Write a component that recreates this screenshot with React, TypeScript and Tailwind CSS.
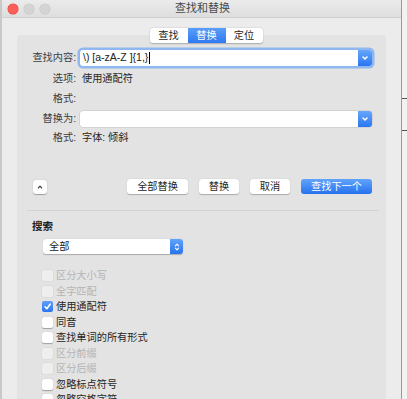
import React from 'react';

const font = { fontFamily: '"Liberation Sans", "Noto Sans CJK SC", sans-serif' };

const Chevron: React.FC<{ className?: string }> = ({ className }) => (
    <svg className={className} viewBox="0 0 10 10" fill="none" stroke="white" strokeWidth={1.6} strokeLinecap="round" strokeLinejoin="round">
        <path d="M3 4l2 2 2-2" />
    </svg>
);

const ComboInput: React.FC<{ value?: string; focused?: boolean }> = ({ value, focused }) => (
    <div
        className={`ml-[4px] flex h-[16px] w-[292px] items-stretch rounded-[3px] bg-white ${focused ? 'ring-[2.5px] ring-[#8fb8f0]' : 'shadow-[0_0_0_0.5px_#c4c4c4]'}`}
    >
        <div className="flex flex-1 items-center pl-[3px] text-[10.5px] text-[#222]">
            {value}
            {focused && <span className="ml-[1px] h-[12px] w-[1px] bg-black" />}
        </div>
        <div className="flex w-[14px] items-center justify-center rounded-r-[3px] bg-gradient-to-b from-[#66a6fa] to-[#2a76f0]">
            <Chevron className="h-[10px] w-[10px]" />
        </div>
    </div>
);

const Row: React.FC<{ label: string; h: number; children?: React.ReactNode }> = ({ label, h, children }) => (
    <div className="flex items-center" style={{ height: h }}>
        <div className="w-[59px] text-right text-[10.2px] text-[#3c3c3c]">{label}</div>
        {children}
    </div>
);

const Button: React.FC<{ label: string; w: string; primary?: boolean }> = ({ label, w, primary }) => (
    <div
        className={`flex h-[15px] items-center justify-center rounded-[3px] text-[10.2px] ${w} ${primary
            ? 'bg-gradient-to-b from-[#62a3fa] to-[#2572ef] text-white'
            : 'bg-white text-[#262626] shadow-[0_0.5px_1px_rgba(0,0,0,0.25)]'
            }`}
    >
        {label}
    </div>
);

const options: { label: string; disabled?: boolean; checked?: boolean }[] = [
    { label: '区分大小写', disabled: true },
    { label: '全字匹配', disabled: true },
    { label: '使用通配符', checked: true },
    { label: '同音' },
    { label: '查找单词的所有形式' },
    { label: '区分前缀', disabled: true },
    { label: '区分后缀', disabled: true },
    { label: '忽略标点符号' },
    { label: '忽略空格字符' },
];

const Checkbox: React.FC<{ label: string; disabled?: boolean; checked?: boolean }> = ({ label, disabled, checked }) => (
    <div className="flex h-[15.5px] items-center pl-[25px]">
        {checked ? (
            <div className="flex h-[11px] w-[11px] items-center justify-center rounded-[2px] bg-gradient-to-b from-[#5ea0f9] to-[#2a74ee]">
                <svg viewBox="0 0 10 10" className="h-[9px] w-[9px]" fill="none" stroke="white" strokeWidth={1.8} strokeLinecap="round" strokeLinejoin="round">
                    <path d="M2.2 5.3l2 2.2 3.8-5" />
                </svg>
            </div>
        ) : (
            <div
                className={`h-[11px] w-[11px] rounded-[2px] ${disabled ? 'bg-[#eeeeee] shadow-[0_0_0_0.5px_#d6d6d6]' : 'bg-white shadow-[0_0.5px_1px_rgba(0,0,0,0.3)]'}`}
            />
        )}
        <span className={`ml-[3px] text-[10.2px] ${disabled ? 'text-[#b4b4b4]' : 'text-[#262626]'}`}>{label}</span>
    </div>
);

export default function App() {
    return (
        <div className="flex h-[399px] w-[407px] overflow-hidden bg-[#f2f2f2]" style={font}>
            {/* window */}
            <div className="flex w-[402px] flex-col border-l-2 border-r border-l-[#c9c9c9] border-r-[#9a9a9a] bg-[#ececec]">
                {/* title bar */}
                <div className="relative flex h-[18px] shrink-0 items-center border-b border-[#d0d0d0] bg-gradient-to-b from-[#ebebeb] to-[#dedede]">
                    <div className="flex items-center gap-[6px] pl-[6px]">
                        <span className="h-[10px] w-[10px] rounded-full bg-[#fb5f57] shadow-[0_0_0_0.5px_#e0443e]" />
                        <span className="h-[10px] w-[10px] rounded-full bg-[#d4d4d4] shadow-[0_0_0_0.5px_#c4c4c4]" />
                        <span className="h-[10px] w-[10px] rounded-full bg-[#d4d4d4] shadow-[0_0_0_0.5px_#c4c4c4]" />
                    </div>
                    <div className="flex-1 pr-[46px] text-center text-[11px] text-[#4a4a4a]">查找和替换</div>
                </div>

                <div className="flex flex-1 flex-col px-[15px]">
                    {/* tabs */}
                    <div className="relative z-10 mt-[10px] flex justify-center pl-[9px]">
                        <div className="flex h-[15px] overflow-hidden rounded-[3px] bg-white text-[10.2px] shadow-[0_0.5px_1.5px_rgba(0,0,0,0.25)]">
                            <div className="flex w-[38px] items-center justify-center text-[#262626]">查找</div>
                            <div className="flex w-[38px] items-center justify-center bg-gradient-to-b from-[#5b9ef9] to-[#2f78f1] text-white">替换</div>
                            <div className="flex w-[37px] items-center justify-center text-[#262626]">定位</div>
                        </div>
                    </div>

                    {/* panel */}
                    <div className="-mt-[8px] flex flex-1 flex-col rounded-t-[4px] bg-[#e3e3e3] pt-[13px]">
                        <Row label="查找内容:" h={20}>
                            <ComboInput value="\) [a-zA-Z ]{1,}" focused />
                        </Row>
                        <Row label="选项:" h={21}>
                            <span className="ml-[6px] text-[10.2px] text-[#262626]">使用通配符</span>
                        </Row>
                        <Row label="格式:" h={20} />
                        <Row label="替换为:" h={19}>
                            <ComboInput />
                        </Row>
                        <Row label="格式:" h={20}>
                            <span className="ml-[6px] text-[10.2px] text-[#262626]">字体: 倾斜</span>
                        </Row>

                        {/* buttons */}
                        <div className="mt-[31px] flex items-center pl-[16px] pr-[14px]">
                            <div className="flex h-[14px] w-[14px] items-center justify-center rounded-[3px] bg-white shadow-[0_0.5px_1px_rgba(0,0,0,0.3)]">
                                <svg viewBox="0 0 10 10" className="h-[8px] w-[8px]" fill="none" stroke="#333" strokeWidth={1.5} strokeLinecap="round" strokeLinejoin="round">
                                    <path d="M3 6l2-2 2 2" />
                                </svg>
                            </div>
                            <div className="ml-auto flex gap-[11px]">
                                <Button label="全部替换" w="w-[61px]" />
                                <Button label="替换" w="w-[40px]" />
                                <Button label="取消" w="w-[40px]" />
                                <Button label="查找下一个" w="w-[71px]" primary />
                            </div>
                        </div>

                        <div className="ml-[10px] mr-[7px] mt-[16px] h-px bg-[#d2d2d2]" />

                        {/* search */}
                        <div className="ml-[15px] mt-[9px] flex h-[14px] items-center text-[10.5px] font-bold text-[#222]">搜索</div>
                        <div className="ml-[26px] mt-[5px] flex h-[15px] w-[140px] items-stretch rounded-[3px] bg-white shadow-[0_0.5px_1px_rgba(0,0,0,0.25)]">
                            <div className="flex flex-1 items-center pl-[6px] text-[10.2px] text-[#222]">全部</div>
                            <div className="flex w-[13px] flex-col items-center justify-center rounded-r-[3px] bg-gradient-to-b from-[#62a3fa] to-[#2572ef]">
                                <svg viewBox="0 0 10 14" className="h-[12px] w-[8px]" fill="none" stroke="white" strokeWidth={1.4} strokeLinecap="round" strokeLinejoin="round">
                                    <path d="M3 5.5l2-2 2 2M3 8.5l2 2 2-2" />
                                </svg>
                            </div>
                        </div>

                        <div className="mt-[14px] flex flex-col">
                            {options.map((o) => (
                                <Checkbox key={o.label} {...o} />
                            ))}
                        </div>
                    </div>
                </div>
            </div>

            {/* background window edge */}
            <div className="flex flex-1 flex-col">
                <div className="h-[98px]" />
                <div className="h-px bg-[#555]" />
                <div className="h-[31px]" />
                <div className="h-px bg-[#555]" />
            </div>
        </div>
    );
}
